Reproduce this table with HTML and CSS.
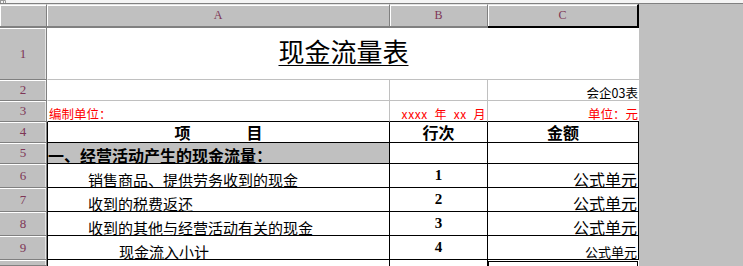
FILE: index.html
```html
<!DOCTYPE html>
<html lang="zh">
<head>
<meta charset="utf-8">
<title>现金流量表</title>
<link rel="stylesheet" href="styles.css">
</head>
<body>
<div class="topbar">
  <svg class="tb-icon" width="6" height="3" viewBox="0 0 6 3"><path d="M0.5 0 V3 M0.5 0.5 H5.5 V3 M3.5 0 V3" fill="none" stroke="#9a9a9a" stroke-width="1"/></svg>
</div>
<div class="sheet">
  <div class="ch corner"></div>
  <div class="ch">A</div>
  <div class="ch">B</div>
  <div class="ch ch-sel">C</div>

  <div class="rh">1</div>
  <div class="c t1"><span class="title">现金流量表</span></div>

  <div class="rh">2</div>
  <div class="c la"></div>
  <div class="c lb"></div>
  <div class="c lc right s12 pb1">会企03表</div>

  <div class="rh">3</div>
  <div class="c la blk red s12 pl1 pb1">编制单位：</div>
  <div class="c lb blk red s12 right pb1 date">xxxx  年  xx  月</div>
  <div class="c lc blk red s12 right pb1">单位：元</div>

  <div class="rh">4</div>
  <div class="c ta center mid bold s16 spread">项　　　目</div>
  <div class="c tb center mid bold s16">行次</div>
  <div class="c tc center mid bold s16">金额</div>

  <div class="rh">5</div>
  <div class="c ta shade bold s16">一、经营活动产生的现金流量：</div>
  <div class="c tb"></div>
  <div class="c tc"></div>

  <div class="rh">6</div>
  <div class="c ta s15 ind1">销售商品、提供劳务收到的现金</div>
  <div class="c tb num">1</div>
  <div class="c tc right s16">公式单元</div>

  <div class="rh">7</div>
  <div class="c ta s15 ind1">收到的税费返还</div>
  <div class="c tb num">2</div>
  <div class="c tc right s16">公式单元</div>

  <div class="rh">8</div>
  <div class="c ta s15 ind1">收到的其他与经营活动有关的现金</div>
  <div class="c tb num">3</div>
  <div class="c tc right s16">公式单元</div>

  <div class="rh">9</div>
  <div class="c ta s15 ind2">现金流入小计</div>
  <div class="c tb num">4</div>
  <div class="c tc right s13 pb1">公式单元</div>

  <div class="rh"></div>
  <div class="c ta10"></div>
  <div class="c tb10"></div>
  <div class="c tc10"><div class="sel"></div></div>
</div>
</body>
</html>
```

FILE: styles.css
```css
* {
  box-sizing: border-box;
  margin: 0;
  padding: 0;
}

body {
  width: 743px;
  height: 266px;
  overflow: hidden;
  background: #c0c0c0;
  font-family: "Noto Sans CJK SC", "Liberation Sans", sans-serif;
  color: #000;
}

.topbar {
  height: 4px;
  background: #f4f4f4;
  border-bottom: 1px solid #808080;
  display: flex;
  align-items: flex-start;
}

.tb-icon {
  display: block;
}

.sheet {
  display: grid;
  grid-template-columns: 47px 343px 98px 151px;
  grid-template-rows: 24px 52px 21px 21px 21px 21px 24px 24px 24px 24px 6px;
}

/* column headers */
.ch {
  background: #c0c0c0;
  border-top: 1px solid #e2e2e2;
  border-right: 1px solid #808080;
  border-bottom: 2px solid #808080;
  box-shadow: inset 1px 1px 0 #fff;
  display: flex;
  align-items: center;
  justify-content: center;
  font-family: "Liberation Serif", serif;
  font-size: 12px;
  color: #7e3656;
}

.ch-sel {
  border-right: 2px solid #000;
  border-bottom: 2px solid #000;
}

/* row headers */
.rh {
  background: #c0c0c0;
  border-right: 1px solid #808080;
  border-bottom: 1px solid #808080;
  box-shadow: inset 0 1px 0 #fff, inset -1px 0 0 #e6e6e6;
  display: flex;
  align-items: center;
  justify-content: center;
  font-family: "Liberation Serif", serif;
  font-size: 13px;
  color: #7e3656;
}

/* data cells */
.c {
  background: #fff;
  display: flex;
  align-items: flex-end;
  white-space: nowrap;
  line-height: 1;
}

.t1 {
  grid-column: span 3;
  border-left: 1px solid #fff;
  border-bottom: 1px solid #c0c0c0;
  justify-content: center;
  align-items: center;
  padding-bottom: 5px;
}

.title {
  font-size: 26px;
  line-height: 26px;
  text-decoration: underline;
  text-decoration-thickness: 1px;
  text-underline-offset: 3px;
}

.la {
  border-left: 1px solid #fff;
  border-right: 1px solid #c0c0c0;
  border-bottom: 1px solid #c0c0c0;
}

.lb {
  border-right: 1px solid #c0c0c0;
  border-bottom: 1px solid #c0c0c0;
}

.lc {
  border-bottom: 1px solid #c0c0c0;
}

.blk {
  border-bottom-color: #000;
}

.ta {
  border-left: 1px solid #000;
  border-right: 1px solid #000;
  border-bottom: 1px solid #000;
}

.tb,
.tc {
  border-right: 1px solid #000;
  border-bottom: 1px solid #000;
}

.ta10 {
  border-left: 1px solid #000;
  border-right: 1px solid #000;
}

.tb10 {
  border-right: 1px solid #000;
}

.tc10 {
  padding: 1px 1px 0 0;
}

.sel {
  width: 100%;
  height: 100%;
  border-top: 1px solid #000;
  border-left: 1px solid #000;
  border-right: 1px solid #000;
}

.shade {
  background: #c0c0c0;
}

.red {
  color: #f00;
}

.right {
  justify-content: flex-end;
  padding-right: 1px;
}

.center {
  justify-content: center;
}

.mid {
  align-items: center;
}

.bold {
  font-weight: 700;
}

.s12 { font-size: 12.5px; }
.s13 { font-size: 13px; }
.s15 { font-size: 15px; }
.s16 { font-size: 16px; }

.pb1 { padding-bottom: 1px; }
.pl1 { padding-left: 1px; }

.date {
  white-space: pre;
  font-size: 12px;
  letter-spacing: 0.6px;
}

.spread {
  letter-spacing: 2px;
  padding-left: 2px;
}

.ind1 { padding-left: 40px; }
.ind2 { padding-left: 71px; }

.num {
  justify-content: center;
  align-items: center;
  font-family: "Liberation Serif", serif;
  font-weight: 700;
  font-size: 15px;
}
```
